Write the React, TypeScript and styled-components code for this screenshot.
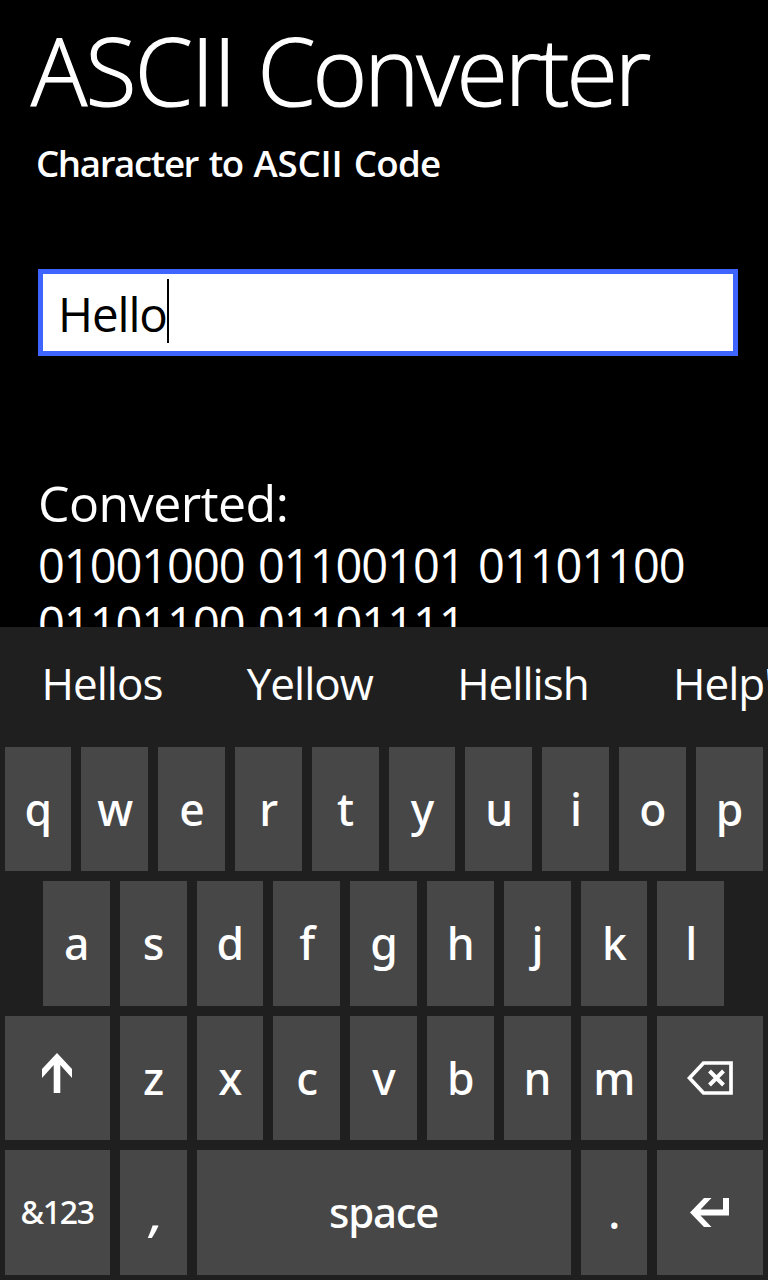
import React from "react";
import styled, { createGlobalStyle } from "styled-components";

const GlobalStyle = createGlobalStyle`
  *, *::before, *::after { box-sizing: border-box; }
  html, body { margin: 0; padding: 0; background: #000; }
  body { overflow: hidden; }
`;

const Screen = styled.div`
  width: 768px;
  height: 1280px;
  display: flex;
  flex-direction: column;
  background: #000;
  color: #fff;
  font-family: "Open Sans", "Noto Sans", sans-serif;
  overflow: hidden;
  font-kerning: none;
`;

const Page = styled.main`
  height: 627px;
  flex: none;
  padding: 20px 30px 0 38px;
  overflow: hidden;
`;

const Title = styled.h1`
  margin: 0 0 18px -7px;
  font-size: 93.5px;
  line-height: 100px;
  font-weight: 300;
  letter-spacing: -1.7px;
  white-space: nowrap;
  -webkit-text-stroke: 1.2px #fff;
`;

const Tracked = styled.span<{ $spacing: number; $words?: number }>`
  letter-spacing: ${(p) => p.$spacing}px;
  word-spacing: ${(p) => p.$words ?? 0}px;
`;

const Subtitle = styled.h2`
  margin: 0 0 81px -2px;
  font-size: 36.7px;
  line-height: 50px;
  font-weight: 600;
  white-space: nowrap;
`;

const InputBox = styled.div`
  display: flex;
  align-items: center;
  height: 87px;
  padding-left: 15px;
  border: 5px solid #3e65ff;
  background: #fff;
  color: #000;
`;

const InputText = styled.span`
  padding-top: 2px;
  font-size: 47.5px;
  line-height: 77px;
  letter-spacing: -1.1px;
`;

const Caret = styled.span`
  width: 2px;
  height: 64px;
  margin-top: -3px;
  background: #000;
`;

const ResultLabel = styled.div`
  margin-top: 117px;
  font-size: 50px;
  line-height: 60px;
  letter-spacing: -0.5px;
`;

const Result = styled.div`
  margin-top: 3px;
  font-size: 47px;
  line-height: 58px;
  letter-spacing: -1.05px;
  word-spacing: 2.3px;
`;

const Keyboard = styled.section`
  flex: 1;
  display: flex;
  flex-direction: column;
  background: #1f1f1f;
`;

const Suggestions = styled.div`
  display: flex;
  gap: 84.2px;
  height: 120px;
  flex: none;
  padding: 1px 0 9px 41.5px;
  overflow: hidden;
`;

const Suggestion = styled.span`
  flex: none;
  font-size: 44px;
  line-height: 110px;
  letter-spacing: -0.97px;
`;

const Keys = styled.div`
  display: flex;
  flex-direction: column;
  gap: 10px;
  padding-left: 4.6px;
  font-family: "Noto Sans", "Open Sans", sans-serif;
`;

const KeyRow = styled.div<{ $indent?: number }>`
  display: flex;
  gap: 10px;
  height: 124.4px;
  padding-left: ${(p) => p.$indent ?? 0}px;
`;

const Key = styled.div<{ $width?: number; $size?: number; $weight?: number; $spacing?: number; $lift?: number; $slant?: boolean }>`
  flex: none;
  display: flex;
  align-items: center;
  justify-content: center;
  width: ${(p) => p.$width ?? 66.8}px;
  padding-bottom: ${(p) => p.$lift ?? 0}px;
  background: #474747;
  font-size: ${(p) => p.$size ?? 44.5}px;
  font-weight: ${(p) => p.$weight ?? 550};
  font-style: ${(p) => (p.$slant ? "italic" : "normal")};
  letter-spacing: ${(p) => p.$spacing ?? -0.8}px;
  line-height: 1;
`;

const Glyph = styled.svg`
  display: block;
  flex: none;
`;

const ShiftIcon = () => (
  <Glyph width="30" height="40" viewBox="0 0 30 40" fill="#fff">
    <path d="M15 0 30 16V25L18.3 12V40H11.7V12L0 25V16Z" />
  </Glyph>
);

const BackspaceIcon = () => (
  <Glyph width="46" height="34" viewBox="0 0 46 34" fill="none" stroke="#fff">
    <path d="M44 2H16.5L2.5 17L16.5 32H44Z" strokeWidth="3.7" />
    <path d="M22.5 10 36.5 24M36.5 10 22.5 24" strokeWidth="4" />
  </Glyph>
);

const EnterIcon = () => (
  <Glyph width="39" height="29" viewBox="0 0 39 29" fill="#fff">
    <path d="M0 14.5 14 0H21.5L10.5 11.5H33V0H39V17.5H10.5L21.5 29H14Z" />
  </Glyph>
);

const words = ["Hellos", "Yellow", "Hellish", "Help's"];
const WIDE = 105.2;

export default function App() {
  return (
    <Screen>
      <GlobalStyle />
      <Page>
        <Title>
          ASCII <Tracked $spacing={-3}>Converter</Tracked>
        </Title>
        <Subtitle>
          <Tracked $spacing={-1.4} $words={2.5}>Character to </Tracked>
          <Tracked $spacing={-0.2} $words={2}>ASCII </Tracked>
          <Tracked $spacing={-0.8}>Code</Tracked>
        </Subtitle>
        <InputBox>
          <InputText>Hello</InputText>
          <Caret />
        </InputBox>
        <ResultLabel>Converted:</ResultLabel>
        <Result>01001000 01100101 01101100 01101100 01101111</Result>
      </Page>
      <Keyboard>
        <Suggestions>
          {words.map((w) => (
            <Suggestion key={w}>{w}</Suggestion>
          ))}
        </Suggestions>
        <Keys>
          <KeyRow>
            {[..."qwertyuiop"].map((c) => (
              <Key key={c}>{c}</Key>
            ))}
          </KeyRow>
          <KeyRow $indent={38.4}>
            {[..."asdfghjkl"].map((c) => (
              <Key key={c}>{c}</Key>
            ))}
          </KeyRow>
          <KeyRow>
            <Key $width={WIDE} $lift={10}>
              <ShiftIcon />
            </Key>
            {[..."zxcvbnm"].map((c) => (
              <Key key={c}>{c}</Key>
            ))}
            <Key $width={WIDE}>
              <BackspaceIcon />
            </Key>
          </KeyRow>
          <KeyRow>
            <Key $width={WIDE} $size={32} $weight={500} $spacing={-1.3} $lift={1}>&amp;123</Key>
            <Key $slant $size={50} $weight={500} $spacing={-7}>,</Key>
            <Key $width={374} $size={42} $spacing={-1.2}>space</Key>
            <Key>.</Key>
            <Key $width={WIDE}>
              <EnterIcon />
            </Key>
          </KeyRow>
        </Keys>
      </Keyboard>
    </Screen>
  );
}
